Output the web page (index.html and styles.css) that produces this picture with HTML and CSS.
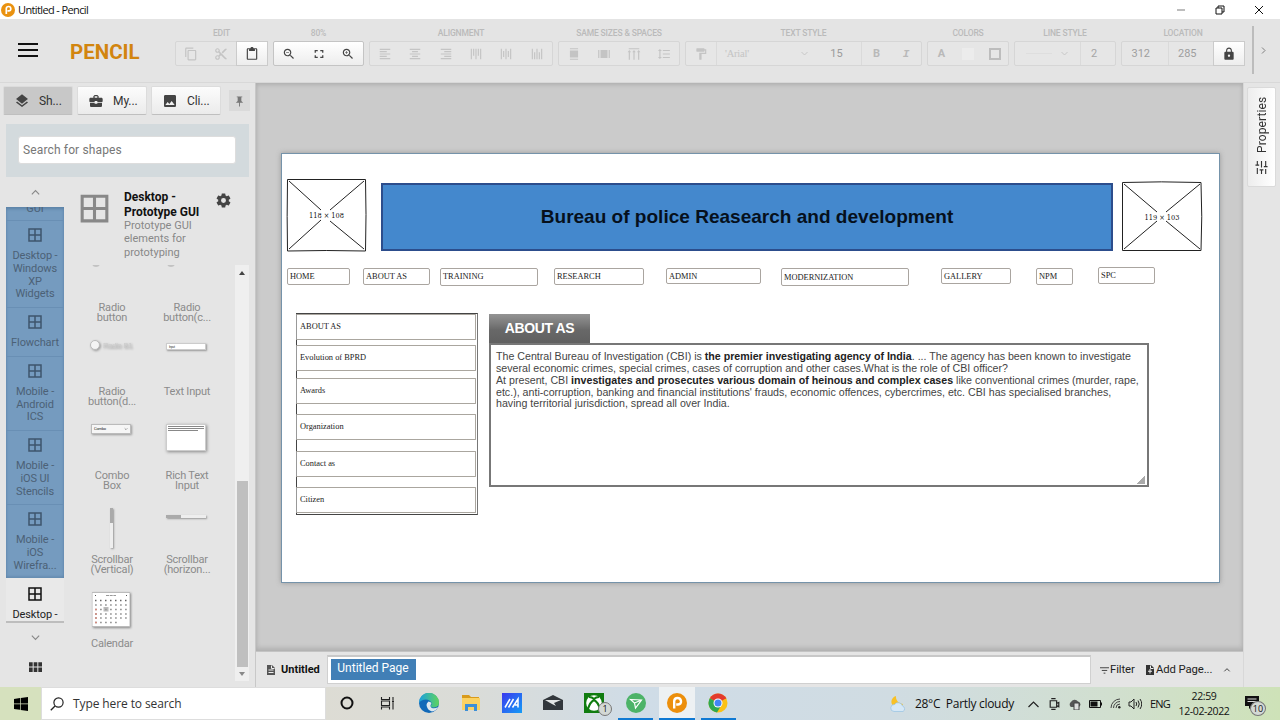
FILE: index.html
```html
<!DOCTYPE html>
<html lang="en">
<head>
<meta charset="utf-8">
<title>Untitled - Pencil</title>
<link rel="stylesheet" href="styles.css">
</head>
<body>
<svg class="defs" aria-hidden="true">
  <defs>
    <symbol id="grid4" viewBox="0 0 24 24"><path fill="currentColor" d="M3 3v18h18V3H3zm8 16H5v-6h6v6zm0-8H5V5h6v6zm8 8h-6v-6h6v6zm0-8h-6V5h6v6z"/></symbol>
    <symbol id="chev" viewBox="0 0 24 24"><path fill="none" stroke="currentColor" stroke-width="2.500" d="M4 8l8 8 8-8"/></symbol>
    <symbol id="al-left" viewBox="0 0 24 24"><path fill="currentColor" d="M15 15H3v2h12v-2zm0-8H3v2h12V7zM3 13h18v-2H3v2zm0 8h18v-2H3v2zM3 3v2h18V3H3z"/></symbol>
    <symbol id="al-center" viewBox="0 0 24 24"><path fill="currentColor" d="M7 15v2h10v-2H7zm-4 6h18v-2H3v2zm0-8h18v-2H3v2zm4-6v2h10V7H7zM3 3v2h18V3H3z"/></symbol>
    <symbol id="zoomglass" viewBox="0 0 24 24"><path fill="currentColor" d="M15.5 14h-.79l-.28-.27C15.41 12.59 16 11.110 16 9.500 16 5.910 13.090 3 9.500 3S3 5.910 3 9.500 5.910 16 9.500 16c1.610 0 3.090-.59 4.230-1.570l.27.28v.79l5 4.990L20.490 19l-4.990-5zm-6 0C7.010 14 5 11.990 5 9.500S7.010 5 9.500 5 14 7.010 14 9.500 11.990 14 9.500 14z"/></symbol>
  </defs>
</svg>

<div class="screen">
  <header class="titlebar">
    <svg class="app-logo" viewBox="0 0 14 14"><circle cx="7" cy="7" r="7" fill="#ea920f"/><path d="M5.300 11V5.500Q5.500 3.500 7.600 3.500T9.800 5.700 7.600 7.900H6.500" fill="none" stroke="#fff" stroke-width="1.700"/></svg>
    <span class="window-title">Untitled - Pencil</span>
    <div class="window-buttons">
      <svg viewBox="0 0 10 10"><path d="M1 5h8" stroke="#999" stroke-width="1.300"/></svg>
      <svg viewBox="0 0 10 10"><path d="M1 3h6v6H1zM3 3V1h6v6H7" fill="none" stroke="#111"/></svg>
      <svg viewBox="0 0 10 10"><path d="M1 1l8 8M9 1L1 9" stroke="#111"/></svg>
    </div>
  </header>

  <div class="toolbar">
    <div class="menu-button"><i></i><i></i><i></i></div>
    <div class="brand">PENCIL</div>
    <div class="groups">
      <div class="group w-edit"><label>EDIT</label>
        <div class="box">
          <span class="cell"><svg viewBox="0 0 24 24"><path fill="currentColor" d="M16 1H4c-1.100 0-2 .9-2 2v14h2V3h12V1zm3 4H8c-1.100 0-2 .9-2 2v14c0 1.100.9 2 2 2h11c1.100 0 2-.9 2-2V7c0-1.100-.9-2-2-2zm0 16H8V7h11v14z"/></svg></span>
          <span class="cell"><svg viewBox="0 0 24 24"><path fill="currentColor" d="M9.640 7.640c.23-.5.36-1.050.36-1.640 0-2.210-1.790-4-4-4S2 3.790 2 6s1.790 4 4 4c.59 0 1.140-.13 1.640-.36L10 12l-2.360 2.360C7.140 14.130 6.590 14 6 14c-2.210 0-4 1.790-4 4s1.790 4 4 4 4-1.790 4-4c0-.59-.13-1.140-.36-1.640L12 14l7 7h3v-1L9.640 7.640zM6 8a2 2 0 110-4 2 2 0 010 4zm0 12a2 2 0 110-4 2 2 0 010 4zM19 3l-6 6 2 2 7-7V3z"/></svg></span>
          <span class="cell live"><svg viewBox="0 0 24 24"><path fill="currentColor" d="M19 2h-4.180C14.400.84 13.300 0 12 0c-1.300 0-2.400.84-2.820 2H5c-1.100 0-2 .9-2 2v16c0 1.100.9 2 2 2h14c1.100 0 2-.9 2-2V4c0-1.100-.9-2-2-2zm0 18H5V4h2v3h10V4h2v16z"/></svg></span>
        </div>
      </div>
      <div class="group w-zoom"><label>80%</label>
        <div class="box live">
          <span class="cell"><svg viewBox="0 0 24 24"><use href="#zoomglass"/><path fill="currentColor" d="M7 9h5v1H7z"/></svg></span>
          <span class="cell"><svg class="small" viewBox="0 0 24 24"><path fill="none" stroke="currentColor" stroke-width="3" d="M3 9V4h6M15 4h6v5M21 15v5h-6M9 20H3v-5"/></svg></span>
          <span class="cell"><svg viewBox="0 0 24 24"><use href="#zoomglass"/><path fill="currentColor" d="M12 10h-2v2H9v-2H7V9h2V7h1v2h2v1z"/></svg></span>
        </div>
      </div>
      <div class="group w-align"><label>ALIGNMENT</label>
        <div class="box">
          <span class="cell"><svg><use href="#al-left"/></svg></span>
          <span class="cell"><svg><use href="#al-center"/></svg></span>
          <span class="cell"><svg class="flip"><use href="#al-left"/></svg></span>
          <span class="cell"><svg class="turn"><use href="#al-left"/></svg></span>
          <span class="cell"><svg class="turn"><use href="#al-center"/></svg></span>
          <span class="cell"><svg class="turnback"><use href="#al-left"/></svg></span>
        </div>
      </div>
      <div class="group w-same"><label>SAME SIZES &amp; SPACES</label>
        <div class="box">
          <span class="cell"><svg viewBox="0 0 24 24"><path fill="currentColor" d="M5 6h14v12H5zM5 2h14v2H5zM5 20h14v2H5z"/></svg></span>
          <span class="cell"><svg viewBox="0 0 24 24"><path fill="currentColor" d="M6 5h12v14H6zM2 5h2v14H2zM20 5h2v14h-2z"/></svg></span>
          <span class="cell"><svg viewBox="0 0 24 24"><path fill="currentColor" d="M3 2h18v2H3zM3 9h2v13H3zM11 9h2v13h-2zM19 9h2v13h-2zM1 9l3-4 3 4zM9 9l3-4 3 4zM17 9l3-4 3 4z"/></svg></span>
          <span class="cell"><svg viewBox="0 0 24 24"><path fill="currentColor" d="M6 7h2.500L5 3.500 1.500 7H4v10H1.500L5 20.500 8.500 17H6V7zm4-2v2h12V5H10zm0 14h12v-2H10v2zm0-6h12v-2H10v2z"/></svg></span>
        </div>
      </div>
      <div class="group w-text"><label>TEXT STYLE</label>
        <div class="box">
          <span class="cell w31"><svg viewBox="0 0 24 24"><path fill="currentColor" d="M18 4V3c0-.55-.45-1-1-1H5c-.55 0-1 .45-1 1v4c0 .55.45 1 1 1h12c.55 0 1-.45 1-1V6h1v4H9v11c0 .55.45 1 1 1h2c.55 0 1-.45 1-1v-9h8V4h-3z"/></svg></span>
          <span class="cell line-left font-pick"><em>'Arial'</em><svg class="tiny"><use href="#chev"/></svg></span>
          <span class="cell w42">15</span>
          <span class="cell line-left w31 letter">B</span>
          <span class="cell w31 letter slant">I</span>
        </div>
      </div>
      <div class="group w-colors"><label>COLORS</label>
        <div class="box"><span class="cell letter">A</span><span class="cell"><i class="swatch"></i></span><span class="cell"><i class="swatch ring"></i></span></div>
      </div>
      <div class="group w-line"><label>LINE STYLE</label>
        <div class="box"><span class="cell stroke-pick"><i></i><svg class="tiny"><use href="#chev"/></svg></span><span class="cell line-left w34">2</span></div>
      </div>
      <div class="group w-loc"><label>LOCATION</label>
        <div class="box"><span class="cell num">312</span><span class="cell line-left num">285</span>
          <span class="cell live w31"><svg class="lock" viewBox="0 0 24 24"><path fill="currentColor" d="M18 8h-1V6c0-2.760-2.240-5-5-5S7 3.240 7 6v2H6c-1.100 0-2 .9-2 2v10c0 1.100.9 2 2 2h12c1.100 0 2-.9 2-2V10c0-1.100-.9-2-2-2zm-6 9a2 2 0 110-4 2 2 0 010 4zm3.100-9H8.900V6a3.100 3.100 0 016.200 0v2z"/></svg></span></div>
      </div>
    </div>
    <div class="more"><svg class="right"><use href="#chev"/></svg></div>
  </div>

  <div class="main">
    <aside class="sidebar">
      <div class="tabs">
        <div class="tab active"><svg viewBox="0 0 24 24"><path fill="currentColor" d="M12 18.540l-7.370-5.730L3 14.070l9 7 9-7-1.630-1.270L12 18.540zM12 16l7.360-5.730L21 9l-9-7-9 7 1.630 1.270L12 16z"/></svg>Sh...</div>
        <div class="tab"><svg viewBox="0 0 24 24"><path fill="currentColor" d="M10 16v-1H3v4c0 1.100.9 2 2 2h14c1.100 0 2-.9 2-2v-4h-7v1h-4zm10-9h-4V5l-2-2h-4L8 5v2H4c-1.100 0-2 .9-2 2v3c0 1.100.9 2 2 2h6v-2h4v2h6c1.100 0 2-.9 2-2V9c0-1.100-.9-2-2-2zm-6 0h-4V5h4v2z"/></svg>My...</div>
        <div class="tab"><svg viewBox="0 0 24 24"><path fill="currentColor" d="M21 19V5c0-1.100-.9-2-2-2H5c-1.100 0-2 .9-2 2v14c0 1.100.9 2 2 2h14c1.100 0 2-.9 2-2zM8.500 13.500l2.500 3.010L14.500 12l4.500 6H5l3.500-4.500z"/></svg>Cli...</div>
        <div class="pin"><svg viewBox="0 0 12 12"><path fill="#777" d="M3 1h6v1H8v4l2 2H6.500v4h-1V8H2l2-2V2H3z"/></svg></div>
      </div>
      <div class="search"><div class="field">Search for shapes</div></div>
      <div class="library">
        <nav class="categories">
          <div class="scroll-btn"><svg class="up"><use href="#chev"/></svg></div>
          <div class="cat-list">
            <div class="cat cut">GUI</div>
            <div class="cat"><svg><use href="#grid4"/></svg>Desktop -<br>Windows<br>XP<br>Widgets</div>
            <div class="cat"><svg><use href="#grid4"/></svg>Flowchart</div>
            <div class="cat"><svg><use href="#grid4"/></svg>Mobile -<br>Android<br>ICS</div>
            <div class="cat"><svg><use href="#grid4"/></svg>Mobile -<br>iOS UI<br>Stencils</div>
            <div class="cat"><svg><use href="#grid4"/></svg>Mobile -<br>iOS<br>Wirefra...</div>
          </div>
          <div class="cat current"><svg><use href="#grid4"/></svg>Desktop -</div>
          <div class="scroll-btn down"><svg><use href="#chev"/></svg></div>
          <svg class="apps" viewBox="0 0 12 9"><path fill="#333" d="M0 0h3.400v4H0zM4.300 0h3.400v4H4.300zM8.600 0H12v4H8.600zM0 5h3.400v4H0zM4.300 5h3.400v4H4.300zM8.600 5H12v4H8.600z"/></svg>
        </nav>
        <section class="shapes">
          <div class="shapes-head">
            <svg class="big"><use href="#grid4"/></svg>
            <div class="head-text"><b>Desktop -<br>Prototype GUI</b><p>Prototype GUI<br>elements for<br>prototyping</p></div>
            <svg class="gear" viewBox="0 0 24 24"><path fill="#444" d="M19.430 12.980c.04-.32.07-.64.07-.98s-.03-.66-.07-.98l2.110-1.650c.19-.15.24-.42.12-.64l-2-3.460c-.12-.22-.39-.3-.61-.22l-2.490 1c-.52-.4-1.080-.73-1.690-.98l-.38-2.650C14.460 2.180 14.250 2 14 2h-4c-.25 0-.46.18-.49.42l-.38 2.650c-.61.25-1.170.59-1.690.98l-2.490-1c-.23-.09-.49 0-.61.22l-2 3.460c-.13.22-.07.49.12.64l2.110 1.650c-.04.32-.07.65-.07.98s.03.66.07.98l-2.110 1.650c-.19.15-.24.42-.12.64l2 3.460c.12.22.39.3.61.22l2.490-1c.52.4 1.080.73 1.690.98l.38 2.650c.03.24.24.42.49.42h4c.25 0 .46-.18.49-.42l.38-2.650c.61-.25 1.170-.59 1.690-.98l2.490 1c.23.09.49 0 .61-.22l2-3.460c.12-.22.07-.49-.12-.64l-2.110-1.650zM12 15.500a3.500 3.500 0 110-7 3.500 3.500 0 010 7z"/></svg>
          </div>
          <div class="shape-scroll">
            <div class="shape-grid">
              <div class="shape"><div class="thumb"><i class="sliver"></i></div>Radio<br>button</div>
              <div class="shape"><div class="thumb"><i class="sliver"></i></div>Radio<br>button(c...</div>
              <div class="shape"><div class="thumb"><div class="t-radio"><i></i><span>Radio B1</span></div></div>Radio<br>button(d...</div>
              <div class="shape"><div class="thumb"><div class="t-input">Input</div></div>Text Input</div>
              <div class="shape"><div class="thumb"><div class="t-combo"><span>Combo</span><svg><use href="#chev"/></svg></div></div>Combo<br>Box</div>
              <div class="shape"><div class="thumb"><div class="t-rich"><i></i><i></i><i></i></div></div>Rich Text<br>Input</div>
              <div class="shape"><div class="thumb"><div class="t-vbar"></div></div>Scrollbar<br>(Vertical)</div>
              <div class="shape"><div class="thumb"><div class="t-hbar"></div></div>Scrollbar<br>(horizon...</div>
              <div class="shape"><div class="thumb">
                <svg class="t-cal" viewBox="0 0 38 34"><rect width="38" height="34" fill="#fff" stroke="#bbb"/><path d="M14 3h10" stroke="#999" stroke-width="1.200" stroke-dasharray="3 .7"/><path d="M3 3h1M34 3h1" stroke="#555"/><rect x="11.500" y="14.500" width="5" height="4.500" fill="#bbb"/><path d="M3 8h33" stroke="#666" stroke-width="1.500" stroke-dasharray="1.500 3.500"/><path d="M3 12.500h33M3 17h33M3 21.500h33M3 25.500h33M3 30h24" stroke="#999" stroke-width="1.300" stroke-dasharray="1.800 3.200"/><path d="M3 17h2M3 21.500h2M3 25.500h2M3 30h2" stroke="#d28c80" stroke-width="1.400"/></svg>
              </div>Calendar</div>
            </div>
            <div class="scrollbar"><i class="arr-up"></i><i class="thumb-bar"></i><i class="arr-down"></i></div>
          </div>
        </section>
      </div>
    </aside>

    <div class="work">
      <div class="canvas">
        <div class="page">
          <svg class="node ph1" viewBox="0 0 82 74"><g fill="none" stroke="#222" stroke-width="1"><path d="M1.500 1.500H79.500Q80.500 36 79.500 73Q40 72 1.500 73Q.8 40 1.500 1.500z"/><path d="M3 3l32 29M78 3L44 32M3 71l32-29M78 71L44 43"/></g><text x="40.500" y="40" class="ph-text" textLength="35" lengthAdjust="spacingAndGlyphs">118 × 108</text></svg>
          <div class="node banner">Bureau of police Reasearch and development</div>
          <svg class="node ph2" viewBox="0 0 82 71"><g fill="none" stroke="#222" stroke-width="1"><path d="M1.500 1.500Q40 .2 80 1.500Q81.500 36 80 69.500H1.500z"/><path d="M3 3l33 28M79 3L45 31M3 68l33-28M79 68L45 40"/></g><text x="41" y="39" class="ph-text" textLength="35" lengthAdjust="spacingAndGlyphs">119 × 103</text></svg>

          <div class="node btn n1">HOME</div>
          <div class="node btn n2">ABOUT AS</div>
          <div class="node btn n3">TRAINING</div>
          <div class="node btn n4">RESEARCH</div>
          <div class="node btn n5">ADMIN</div>
          <div class="node btn n6">MODERNIZATION</div>
          <div class="node btn n7">GALLERY</div>
          <div class="node btn n8">NPM</div>
          <div class="node btn n9">SPC</div>

          <div class="node side">
            <div class="side-item">ABOUT AS</div>
            <div class="side-item g1">Evolution of BPRD</div>
            <div class="side-item g2">Awards</div>
            <div class="side-item g3">Organization</div>
            <div class="side-item g4">Contact as</div>
            <div class="side-item g5">Citizen</div>
          </div>

          <div class="node tab-title">ABOUT AS</div>
          <div class="node rich">
            <p>The Central Bureau of Investigation (CBI) is <b>the premier investigating agency of India</b>. ... The agency has been known to investigate</p>
            <p>several economic crimes, special crimes, cases of corruption and other cases.What is the role of CBI officer?</p>
            <p>At present, CBI <b>investigates and prosecutes various domain of heinous and complex cases</b> like conventional crimes (murder, rape,</p>
            <p>etc.), anti-corruption, banking and financial institutions' frauds, economic offences, cybercrimes, etc. CBI has specialised branches,</p>
            <p>having territorial jurisdiction, spread all over India.</p>
            <i class="grip"></i>
          </div>
        </div>
      </div>
      <div class="pagebar">
        <svg class="doc" viewBox="0 0 16 20"><path fill="#555" d="M0 0h10l6 6v14H0z"/><path stroke="#eee" stroke-width="2" d="M3 10h10M3 15h10M9 1v6h6" fill="none"/></svg>
        <b>Untitled</b>
        <div class="page-list"><span>Untitled Page</span></div>
        <svg class="filter" viewBox="0 0 10 8"><path stroke="#333" d="M0 1.500h10M2 4.500h6M4 7.500h2"/></svg>
        <span class="lnk">Filter</span>
        <svg class="doc add" viewBox="0 0 16 20"><path fill="#333" d="M0 0h10l6 6v14H0z"/><path stroke="#eee" stroke-width="2" d="M8 8v9M4 12.500h8M9 1v6h6" fill="none"/></svg>
        <span class="lnk wide">Add Page...</span>
        <svg class="up"><use href="#chev"/></svg>
      </div>
    </div>

    <aside class="rightbar"><div class="prop-tab"><span>Properties</span>
      <svg viewBox="0 0 14 14"><path fill="none" stroke="#333" stroke-width="1.200" d="M2.500 0v5M.5 4.500h4M2.500 7.500V14M7 0v7M5 9.500h4M7 9.500V14M11.500 0v6M9.500 6h4M11.500 8.500V14"/></svg></div></aside>
  </div>

  <footer class="taskbar">
    <div class="start"><svg viewBox="0 0 14 14"><path fill="#000" d="M0 2l6-.9v5.500H0zM6.700 1L14 0v6.600H6.700zM0 7.300h6v5.500L0 12zM6.700 7.300H14V14l-7.300-1z"/></svg></div>
    <div class="tsearch"><svg viewBox="0 0 14 14"><circle cx="8.500" cy="5.500" r="4.600" fill="none" stroke="#222" stroke-width="1.200"/><path d="M5 9L.8 13.200" stroke="#222" stroke-width="1.300"/></svg><span>Type here to search</span></div>
    <div class="apps-row">
      <div class="app"><svg viewBox="0 0 20 20"><circle cx="10" cy="10" r="5.500" fill="none" stroke="#111" stroke-width="2"/></svg></div>
      <div class="app"><svg viewBox="0 0 20 20"><path fill="none" stroke="#222" stroke-width="1.100" d="M3.500 4v2.500h8V4M3.500 16.500V14h8v2.500M3.500 8h8v4.500h-8zM15 4v3M15 10v6.500"/><path stroke="#222" stroke-width="2" d="M14 8.500h2"/></svg></div>
      <div class="app"><svg viewBox="0 0 20 20"><defs><linearGradient id="eg" x1="0" x2="1"><stop offset="0" stop-color="#1a9fe0"/><stop offset="1" stop-color="#5fd45c"/></linearGradient></defs><circle cx="10" cy="10" r="10" fill="#1169b8"/><path d="M0 10A10 10 0 0120 9.500Q20 14 15 14.500Q11.500 14.500 11.700 12.500Q13 11.500 12.500 10Q11 6.500 7 6.500Q2 6.500 0 10z" fill="url(#eg)"/><path d="M7.500 12Q7.500 10 9.500 8.500Q12.500 9 12.400 10.700Q10.500 13 12.500 14.700Q15.500 16 19 14Q17 18 13 18.500Q8 17 7.500 12z" fill="#dfe8ee"/></svg></div>
      <div class="app"><svg viewBox="0 0 20 20"><path d="M1 2h7l2 2h8v3H1z" fill="#d99b1b"/><path d="M1 5h18v12H1z" fill="#fbd262"/><path d="M4 18v-7h12v7h-3v-4H7v4z" fill="#3d8fd6"/></svg></div>
      <div class="app"><svg viewBox="0 0 20 20"><defs><linearGradient id="ag" x2="1" y2="1"><stop offset="0" stop-color="#3b38ef"/><stop offset="1" stop-color="#159cf5"/></linearGradient></defs><path d="M0 0h20v20H0z" fill="url(#ag)"/><path d="M3 14.500l5-8.500M6.500 14.500L11.500 6M10.500 14.500L16 6v8.500M13 12h3" fill="none" stroke="#fff" stroke-width="1.500"/></svg></div>
      <div class="app"><svg viewBox="0 0 20 20"><path d="M0 7l10-5 10 5v10H0z" fill="#32373c"/><path d="M2 7h16l-7 3 2 3-4-2z" fill="#e3e6e6"/></svg></div>
      <div class="app"><svg viewBox="0 0 20 20"><path d="M0 0h20v20H0z" fill="#107c10"/><circle cx="10" cy="10" r="7.800" fill="#fff"/><path d="M4 16Q6 9 10 7Q14 9 16 16M5 4Q8 4 10 6Q12 4 15 4" fill="none" stroke="#107c10" stroke-width="2"/></svg><span class="badge b1">1</span></div>
      <div class="app open"><svg viewBox="0 0 20 20"><circle cx="10" cy="10" r="10" fill="#4cb368"/><path d="M4.500 6.500l11 .5-6 8-1-5zM8.500 10l7-3" fill="none" stroke="#fff" stroke-width="1.200"/></svg></div>
      <div class="app open front"><svg viewBox="0 0 20 20"><circle cx="10" cy="10" r="10" fill="#ec8f0c"/><path d="M7.200 15.500V8Q7.500 5 10.500 5T14 8 11 11.500H9.200" fill="none" stroke="#fff" stroke-width="2.400"/></svg></div>
      <div class="app open"><svg viewBox="0 0 20 20"><circle cx="10" cy="10" r="9.500" fill="#fbc116"/><path d="M10 10L1.800 5.200A9.500 9.500 0 0118.200 5.200z" fill="#e33b2e"/><path d="M1.800 5.200A9.500 9.500 0 009 19.500L13.500 12 10 10z" fill="#2da94f"/><path d="M10 5.500h8.400l-.4-1H10z" fill="#e33b2e"/><circle cx="10" cy="10" r="4.500" fill="#fff"/><circle cx="10" cy="10" r="3.500" fill="#4285f4"/></svg></div>
    </div>
    <div class="tray">
      <svg class="weather" viewBox="0 0 18 16"><path d="M7 0a6 6 0 107 8A7 7 0 017 0z" fill="#f8c127"/><path d="M5 15.500a3.500 3.500 0 01.5-7 4.500 4.500 0 018 1.500 3 3 0 01.5 5.500z" fill="#d6e8f6" stroke="#8dbde0" stroke-width=".6"/></svg>
      <span class="wtext">28°C&nbsp; Partly cloudy</span>
      <svg class="i-up" viewBox="0 0 10 8"><path d="M0 7l5-5 5 5" fill="none" stroke="#222" stroke-width="1.200"/></svg>
      <svg class="i-cam" viewBox="0 0 10 13"><path d="M1 3.500h6v6H1zM7 6l2-1v4L7 8M2 1.500h4M2 11.500h4" fill="none" stroke="#222" stroke-width="1.100"/></svg>
      <svg class="i-cloud" viewBox="0 0 13 12"><path d="M3 9a3 3 0 010-5 4 4 0 017-.5A3 3 0 0111 9z" fill="#555"/><path d="M6 5h5v7H6z" fill="#ddd" stroke="#444"/></svg>
      <svg class="i-bat" viewBox="0 0 13 8"><path d="M.5.500h11v7H.5zM12.500 2.500v3" fill="none" stroke="#111"/><path d="M1.500 1.500h7v5h-7z" fill="#111"/></svg>
      <svg class="i-wifi" viewBox="0 0 11 11"><path d="M1 10A9 9 0 0110 1M3.500 10A6.500 6.500 0 0110 3.500M6 10a4 4 0 014-4" fill="none" stroke="#444"/><circle cx="9.300" cy="9.300" r="1.200" fill="#222"/></svg>
      <svg class="i-vol" viewBox="0 0 14 12"><path d="M1 4h2l3-3v10L3 8H1zM8 4q1.500 2 0 4M10 2.500q2.500 3.500 0 7M12 1q3.500 5 0 10" fill="none" stroke="#222"/></svg>
      <span class="lang">ENG</span>
      <div class="clock"><span class="time">22:59</span><span class="date">12-02-2022</span></div>
      <div class="notif"><svg viewBox="0 0 14 13"><path d="M0 0h14v10H7l-3 3v-3H0z" fill="#111"/><path d="M2.500 3h9M2.500 5.500h9" stroke="#ddd"/></svg><span class="badge b10">10</span></div>
    </div>
  </footer>
</div>
</body>
</html>
```
FILE: styles.css
```css
* { box-sizing: border-box; }
body { margin: 0; background: #e4e4e4; font-family: Roboto, "Liberation Sans", sans-serif; font-size: 12px; color: #333; }
svg { display: block; flex: none; }
i { font-style: normal; display: block; }
.defs { position: absolute; width: 0; height: 0; }
.screen { width: 1280px; height: 720px; display: flex; flex-direction: column; overflow: hidden; }

/* title bar */
.titlebar { height: 19px; flex: none; background: #fff; display: flex; align-items: center; padding: 0 16px 0 1px; }
.app-logo { width: 14px; height: 14px; }
.window-title { margin-left: 3px; font: 11px "Open Sans", sans-serif; color: #111; letter-spacing: -.62px; flex: 1; }
.window-buttons { display: flex; gap: 29px; }
.window-buttons svg { width: 10px; height: 10px; }

/* toolbar */
.toolbar { height: 64px; flex: none; display: flex; background: #e4e4e4; border-bottom: 1px solid #d8d8d8; }
.menu-button { width: 20px; margin: 24px 0 0 18px; display: flex; flex-direction: column; gap: 4px; }
.menu-button i { height: 2px; background: #111; }
.brand { width: 137px; padding: 19px 0 0 32px; font-weight: 700; font-size: 20.500px; line-height: 28px; color: #d2850f; }
.groups { display: flex; gap: 5px; padding-top: 9px; }
.group label { display: block; height: 13px; line-height: 11px; text-align: center; font-size: 8.500px; font-weight: 500; letter-spacing: -.15px; color: #bababa; }
.w-edit { width: 93px; } .w-zoom { width: 91px; } .w-align { width: 184px; } .w-same { width: 122px; }
.w-text { width: 237px; } .w-colors { width: 82px; } .w-line { width: 102px; } .w-loc { width: 124px; }
.box { height: 25px; border: 1px solid #d6d6d6; border-radius: 2px; display: flex; background: #e6e6e6; }
.cell { flex: 1; display: flex; align-items: center; justify-content: center; color: #c4c4c4; font-size: 11px; }
.cell svg { width: 14px; height: 14px; }
.cell svg.small { width: 10px; height: 10px; }
.cell svg.tiny { width: 9px; height: 9px; }
.cell svg.lock { width: 14px; height: 14px; }
.live { background: linear-gradient(#fff, #ededed); border-color: #c4c4c4; color: #444; box-shadow: 0 0 0 1px #cbcbcb; }
.live .cell { color: #444; }
.box.live { box-shadow: none; }
.flip { transform: scaleX(-1); } .turn { transform: rotate(90deg); } .turnback { transform: rotate(-90deg); }
.line-left { border-left: 1px solid #dadada; }
.cell.w31 { flex: none; width: 30px; }
.cell.w42 { flex: none; width: 47px; color: #9b9b9b; padding-right: 2px; }
.cell.w34 { flex: none; width: 35px; color: #a5a5a5; padding-right: 8px; }
.font-pick { justify-content: space-between; padding: 0 5px 0 8px; }
.font-pick em { font: 10.500px "Liberation Serif", serif; letter-spacing: -.2px; }
.letter { font-weight: 700; font-size: 11px; color: #b9b9b9; }
.slant { font-style: italic; font-family: "Liberation Mono", monospace; }
.swatch { width: 12px; height: 12px; background: #ececec; }
.swatch.ring { background: none; border: 2px solid #bdbdbd; }
.stroke-pick { justify-content: space-between; padding: 0 11px; }
.stroke-pick i { width: 26px; height: 1px; background: #dedede; }
.num { color: #9e9e9e; padding-right: 8px; }
.more { width: 28px; height: 48px; margin: 7px 0 0 7px; border-left: 2px solid #bcbcbc; display: flex; align-items: center; padding-left: 5px; color: #777; }
.more svg { width: 9px; height: 9px; transform: rotate(-90deg); }

.main { height: 604px; flex: none; display: flex; }

/* sidebar */
.sidebar { width: 256px; border-right: 1px solid #c8c8c8; background: #e5e5e5; }
.tabs { display: flex; gap: 4px; padding: 3px 0 1px 3px; align-items: center; }
.tab { width: 70px; height: 29px; display: flex; align-items: center; gap: 9px; padding-left: 10px; font-size: 12px; letter-spacing: -.1px; background: linear-gradient(#fcfcfc, #ebebeb); border: 1px solid #dcdcdc; border-bottom-color: #bfbfbf; border-radius: 2px; }
.tab svg { width: 16px; height: 16px; color: #444; }
.tab.active { background: #c8c8c8; }
.pin { width: 21px; height: 21px; margin-left: 4px; background: #dadada; display: flex; align-items: center; justify-content: center; }
.pin svg { width: 11px; height: 12px; }
.search { margin: 8px 0 0 6px; width: 243px; height: 53px; background: #d3dadd; padding: 12px 12px; }
.field { height: 28px; width: 218px; background: #fff; border: 1px solid #ddd; border-radius: 3px; padding-left: 4px; font-size: 12px; line-height: 26px; color: #777; letter-spacing: .14px; }
.library { display: flex; height: 510px; }
.categories { width: 64px; padding-left: 6px; }
.scroll-btn { height: 30px; display: flex; align-items: center; justify-content: center; color: #888; }
.scroll-btn svg { width: 11px; height: 11px; }
.up { transform: scaleY(-1); }
.cat-list { height: 371px; background: #759bbf; overflow: hidden; box-shadow: inset 0 2px 3px #5c83a8, inset 0 -2px 2px #688eb3; }
.cat { text-align: center; font-size: 11px; line-height: 12.750px; color: #4c6176; padding: 6px 0; border-bottom: 1px solid #698fb4; letter-spacing: -.1px; }
.cat svg { width: 18px; height: 18px; margin: -1px auto 6px; color: #3e566d; }
.cat.cut { height: 14px; padding: 0; line-height: 4px; font-size: 11px; }
.cat.current { height: 45px; padding-top: 8px; color: #222; border-bottom: 2px solid #bdbdbd; background: #e9e9e9; }
.cat.current svg { color: #111; }
.scroll-btn.down { height: 28px; }
.apps { width: 13px; height: 10px; margin: 11px auto 0; }
.shapes { flex: 1; padding-left: 10px; }
.shapes-head { height: 88px; display: flex; padding-top: 13px; }
.big { width: 37px; height: 37px; margin: 0 0 0 2px; color: #888; }
.head-text { width: 88px; margin-left: 11px; font-size: 11px; line-height: 13.400px; color: #888; white-space: nowrap; }
.head-text b { display: block; font-size: 12px; line-height: 14.500px; color: #111; }
.head-text p { margin: 0; }
.gear { width: 17px; height: 17px; margin: 2px 0 0 3px; }
.shape-scroll { height: 416px; display: flex; overflow: hidden; }
.shape-grid { display: grid; grid-template-columns: 75px 75px; grid-auto-rows: 84px; width: 161px; margin-top: -9px; }
.shape { text-align: center; font-size: 11px; line-height: 10px; color: #8b8b8b; letter-spacing: -.2px; padding-left: 1px; }
.thumb { height: 47px; display: flex; justify-content: center; align-items: flex-start; padding-right: 2px; }
.sliver { width: 8px; height: 11px; margin-right: 30px; border-radius: 5px; background: #c2c2c2; }
.t-radio { width: 42px; display: flex; gap: 3px; align-items: center; white-space: nowrap; font: 7.500px "Liberation Sans", sans-serif; filter: drop-shadow(1px 1px 1px #999); color: #ccc; }
.t-radio i { width: 10px; height: 10px; flex: none; border-radius: 5px; background: #f4f4f4; border: 1px solid #bbb; }
.t-input { width: 40px; height: 7px; margin-top: 3px; background: #fff; border: 1px solid #ccc; box-shadow: 1px 1px 2px #999; font-size: 3px; line-height: 6px; text-align: left; padding-left: 2px; color: #333; }
.t-combo { width: 40px; height: 10px; background: #f6f6f6; border: 1px solid #bbb; box-shadow: 1px 1px 2px #999; font-size: 4px; line-height: 8px; display: flex; justify-content: space-between; padding: 0 2px; color: #222; }
.t-combo svg { width: 4px; height: 8px; }
.t-rich { width: 40px; height: 27px; background: #fff; border: 1px solid #ccc; box-shadow: 1px 1px 3px #888; padding: 1px; display: flex; flex-direction: column; gap: 1px; }
.t-rich i { height: 1px; background: #888; } .t-rich i:last-child { width: 30px; }
.t-vbar { width: 3px; height: 40px; background: linear-gradient(#aaa 38%, #eee 38%); box-shadow: 1px 1px 2px #999; }
.t-hbar { width: 40px; height: 3px; margin-top: 7px; background: linear-gradient(90deg, #aaa 38%, #eee 38%); box-shadow: 1px 1px 2px #999; }
.t-cal { width: 38px; height: 35px; filter: drop-shadow(1px 1px 1px #888); }
.scrollbar { width: 14px; background: #efefef; display: flex; flex-direction: column; align-items: center; }
.arr-up, .arr-down { width: 0; height: 0; border: 3px solid transparent; }
.arr-up { border-bottom: 4px solid #444; border-top: 0; margin-top: 6px; }
.thumb-bar { width: 11px; height: 186px; background: #bfbfbf; margin-top: 206px; }
.arr-down { border-top: 4px solid #888; border-bottom: 0; margin-top: 5px; }

/* canvas */
.work { width: 987px; display: flex; flex-direction: column; }
.canvas { height: 568px; background: #cbcbcb; padding: 70px 23px 68px 25px; box-shadow: inset 0 2px 4px #aeaeae, inset 0 -4px 5px -1px #b0b0b0; }
.page { position: relative; width: 939px; height: 430px; background: #fff; border: 1px solid #7593aa; box-shadow: 0 0 5px #999; font-family: "Liberation Serif", serif; color: #222; }
.node { position: absolute; }
.ph1 { left: 4px; top: 24px; width: 82px; height: 74px; }
.ph2 { left: 839px; top: 27px; width: 82px; height: 71px; }
.ph-text { font: 8px "DejaVu Serif", serif; text-anchor: middle; fill: #111; }
.banner { left: 99px; top: 29px; width: 732px; height: 68px; background: #4488cd; border: 2px solid #2c4d8c; font: 700 19.050px/63px "Liberation Sans", sans-serif; color: #06101c; text-align: center; white-space: nowrap; }
.btn { height: 17px; border: 1px solid #aaa5a0; border-radius: 2px; font-size: 8.400px; line-height: 15px; padding-left: 2px; white-space: nowrap; }
.n1 { left: 5px; top: 114px; width: 63px; } .n2 { left: 81px; top: 114px; width: 67px; } .n3 { left: 158px; top: 114px; width: 98px; height: 18px; line-height: 16px; }
.n4 { left: 272px; top: 114px; width: 90px; } .n5 { left: 384px; top: 114px; width: 95px; height: 16px; } .n6 { left: 499px; top: 114px; width: 128px; height: 18px; line-height: 17px; }
.n7 { left: 659px; top: 114px; width: 70px; height: 16px; } .n8 { left: 754px; top: 114px; width: 37px; } .n9 { left: 816px; top: 113px; width: 57px; }
.side { left: 14px; top: 159px; width: 182px; height: 202px; border: 1px solid #444; border-right: 1.500px solid #777; }
.side-item { width: 180px; height: 26px; border: 1px solid #aaa69f; border-left-color: #999; border-radius: 1px; margin-left: -1px; padding-left: 3px; font-size: 8.400px; line-height: 24px; background: #fff; }
.g1 { margin-top: 5px; } .g2 { margin-top: 7px; } .g3 { margin-top: 10px; } .g4 { margin-top: 11px; } .g5 { margin-top: 10px; }
.tab-title { left: 207px; top: 160px; width: 101px; height: 29px; background: linear-gradient(#949494, #797979 35%, #686868 55%, #606060); color: #fff; font: 700 14px/28px "Liberation Sans", sans-serif; text-align: center; letter-spacing: -.4px; }
.rich { left: 207px; top: 189px; width: 660px; height: 144px; border: 2px solid #777; padding: 6px 5px; background: #fff; font: 10.650px/11.850px "Liberation Sans", sans-serif; color: #444; }
.rich p { margin: 0; white-space: nowrap; } .rich b { color: #222; }
.grip { position: absolute; right: 2px; bottom: 1px; width: 8px; height: 8px; background: linear-gradient(135deg, transparent 50%, #aaa 50%); }

/* page bar */
.pagebar { height: 36px; border-top: 1px solid #c4c4c4; background: #e5e5e5; display: flex; align-items: center; padding-left: 11px; font-size: 12px; color: #222; }
.doc { width: 8px; height: 10px; }
.pagebar b { margin-left: 6px; width: 46px; font-size: 11px; font-weight: 700; color: #111; }
.page-list { width: 764px; height: 29px; background: #fff; border: 1px solid #d0d0d0; border-top: 2px solid #c8c8c8; padding: 2px 3px; }
.page-list span { display: block; width: 85px; height: 21px; background: #417fb6; color: #fff; line-height: 19px; text-align: center; font-size: 12px; white-space: nowrap; padding-right: 1px; }
.filter { width: 9px; height: 8px; margin: 0 1px 0 9px; }
.lnk { font-size: 11.300px; width: 25px; white-space: nowrap; letter-spacing: -.1px; }
.add { margin: 0 2px 0 11px; }
.lnk.wide { width: 56px; }
.pagebar > .up { width: 8px; height: 8px; margin-left: 11px; }

.rightbar { width: 37px; background: #e5e5e5; border-left: 1px solid #d8d8d8; padding: 4px 0 0 3px; }
.prop-tab { width: 29px; height: 100px; background: linear-gradient(90deg, #ededed, #fff); border: 1px solid #dadada; border-radius: 2px; display: flex; flex-direction: column; align-items: center; padding-top: 8px; gap: 8px; }
.prop-tab span { writing-mode: vertical-rl; transform: rotate(180deg); font-size: 12px; line-height: 18px; height: 57px; letter-spacing: .1px; }
.prop-tab svg { width: 13px; height: 13px; }

/* taskbar */
.taskbar { height: 33px; flex: none; display: flex; background: linear-gradient(90deg, #dddcd4 25%, #dadcd8 37%, #cfdce7 50%, #d0dce2 70%, #d1dfcf 87%, #cee2b8 100%); font-family: "Open Sans", sans-serif; color: #111; }
.start { width: 41px; background: #d6e1be; display: flex; align-items: center; justify-content: center; }
.start svg { width: 14px; height: 14px; }
.tsearch { width: 285px; background: #fff; display: flex; align-items: center; padding-left: 8px; gap: 9px; border: 1px solid #ddd; }
.tsearch svg { width: 14px; height: 14px; }
.tsearch span { font-size: 12px; color: #333; letter-spacing: -.1px; }
.apps-row { width: 413px; display: flex; }
.app { flex: 1; display: flex; align-items: center; justify-content: center; position: relative; margin: 0 3px; border-bottom: 2px solid transparent; }
.app svg { width: 20px; height: 20px; }
.app.open { border-bottom-color: #0f79d3; }
.front { background: #edf1f3; }
.badge { position: absolute; border-radius: 50%; border: 1px solid #777; background: #d3d8d5; text-align: center; }
.b1 { right: 0; top: 15px; width: 14px; height: 14px; font-size: 9px; line-height: 12px; }
.tray { display: flex; align-items: center; padding-left: 150px; }
.weather { width: 18px; height: 16px; }
.wtext { margin-left: 8px; width: 101px; font-size: 12px; letter-spacing: -.3px; white-space: nowrap; }
.i-up { width: 11px; height: 8px; margin-left: 12px; }
.i-cam { width: 11px; height: 14px; margin-left: 10px; }
.i-cloud { width: 13px; height: 12px; margin-left: 8px; }
.i-bat { width: 13px; height: 8px; margin-left: 8px; }
.i-wifi { width: 11px; height: 11px; margin-left: 8px; }
.i-vol { width: 14px; height: 12px; margin-left: 7px; }
.lang { margin-left: 8px; width: 20px; font-size: 11px; letter-spacing: -.8px; }
.clock { width: 52px; margin-left: 8px; text-align: center; font-size: 10.500px; line-height: 15px; display: flex; flex-direction: column; letter-spacing: -.4px; }
.notif { position: relative; width: 14px; height: 13px; margin: -2px 0 0 15px; }
.notif svg { width: 14px; height: 13px; }
.b10 { left: 5px; top: 5px; width: 16px; height: 15px; font-size: 9px; line-height: 13px; }
```
